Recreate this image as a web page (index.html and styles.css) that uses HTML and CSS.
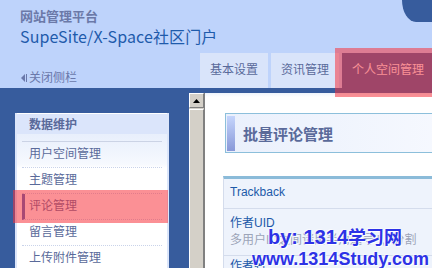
FILE: index.html
```html
<!DOCTYPE html>
<html lang="zh-CN">

<head>
    <meta charset="UTF-8">
    <title>SupeSite/X-Space 管理平台</title>
    <link rel="stylesheet" href="styles.css">
</head>

<body>
    <div class="page">

        <!-- Kop met logo en tabs -->
        <header class="top">
            <div class="brand">
                <div class="brand-sub">网站管理平台</div>
                <div class="brand-name">SupeSite/X-Space社区门户</div>
                <a class="toggle">
                    <svg width="9" height="10" viewBox="0 0 9 10">
                        <path d="M5 1 L1 5 L5 9 Z" fill="#6a78aa" />
                        <rect x="6" y="1" width="1" height="8" fill="#6a78aa" />
                    </svg>关闭侧栏
                </a>
            </div>
            <nav class="tabs">
                <a class="tab">基本设置</a>
                <a class="tab">资讯管理</a>
                <a class="tab active">个人空间管理</a>
            </nav>
        </header>

        <div class="strip"></div>

        <div class="main">
            <!-- Zijmenu -->
            <aside class="side">
                <div class="menu">
                    <div class="menu-head">数据维护</div>
                    <div class="menu-body">
                        <div class="menu-gap"></div>
                        <ul>
                            <li>用户空间管理</li>
                            <li>主题管理</li>
                            <li class="current">评论管理</li>
                            <li>留言管理</li>
                            <li>上传附件管理</li>
                        </ul>
                    </div>
                </div>
            </aside>

            <!-- Schuifbalk -->
            <div class="scroll">
                <div class="scroll-btn">
                    <svg width="7" height="4" viewBox="0 0 7 4">
                        <path d="M3.5 0 L7 4 L0 4 Z" fill="#000" />
                    </svg>
                </div>
                <div class="scroll-thumb"></div>
            </div>

            <!-- Inhoud -->
            <div class="content">
                <div class="title-box">
                    <span class="accent"></span>
                    <h2>批量评论管理</h2>
                </div>
                <div class="form">
                    <div class="row row-single">Trackback</div>
                    <div class="row">
                        <div class="label">作者UID</div>
                        <div class="desc">多用户ID之间请用半角逗号 "," 分割</div>
                    </div>
                    <div class="row row-last">
                        <div class="label">作者名</div>
                    </div>
                </div>
            </div>
        </div>

        <!-- Markeringen over de pagina -->
        <div class="mark mark-tab"></div>
        <div class="mark mark-item"></div>

        <div class="watermark">
            <div class="wm-top">by: 1314<span>学习网</span></div>
            <div class="wm-bottom">www.1314Study.com</div>
        </div>
    </div>
</body>

</html>
```

FILE: styles.css
```css
/* Basis */
html,
body {
    margin: 0;
    padding: 0;
    overflow: hidden;
    font-family: "Liberation Sans", "Noto Sans CJK SC", sans-serif;
    font-size: 12px;
    background: #ffffff;
}

.page {
    position: relative;
    width: 432px;
    height: 268px;
    overflow: hidden;
}

/* Kop */
.top {
    position: relative;
    display: flex;
    height: 88px;
    background: #bed3fb;
}

.top::after {
    content: "";
    position: absolute;
    top: 0;
    right: 0;
    width: 30px;
    height: 22px;
    background: #375c9d;
    border-bottom-left-radius: 14px 22px;
}

.brand {
    flex: 0 0 180px;
    min-width: 0;
    padding: 8px 0 0 20px;
    white-space: nowrap;
}

.brand-sub {
    font-family: "Noto Sans CJK SC", sans-serif;
    font-size: 13px;
    font-weight: bold;
    line-height: 16px;
    color: #6b79a8;
}

.brand-name {
    margin-top: 2px;
    font-family: "Noto Sans CJK SC", sans-serif;
    font-size: 16px;
    line-height: 20px;
    letter-spacing: 0.1px;
    color: #1f5bab;
}

.toggle {
    display: flex;
    align-items: center;
    margin-top: 24px;
    line-height: 16px;
    color: #6a78aa;
}

.tabs {
    display: flex;
    gap: 3px;
    align-self: flex-end;
}

.tab {
    height: 35px;
    line-height: 35px;
    padding: 0 10px;
    background: #d9e4fa;
    color: #5a6a9a;
    white-space: nowrap;
}

.tab.active {
    background: #375c9d;
    color: #ffffff;
}

.strip {
    height: 5px;
    background: #375c9d;
}

/* Hoofddeel */
.main {
    display: grid;
    grid-template-columns: 189px 16px 1fr;
    height: 175px;
}

.side {
    background: #375c9d;
    padding: 20px 0 0 15px;
}

.menu {
    width: 150px;
    height: 200px;
    background: #ffffff;
    border-left: 2px solid #dce6fa;
    border-right: 2px solid #dce6fa;
}

.menu-head {
    height: 17px;
    padding: 3px 0 0 12px;
    border-top: 1px solid #ffffff;
    background: #dbe5fb;
    font-weight: bold;
    line-height: 17px;
    color: #5a6a9a;
}

.menu-body {
    padding: 0 5px;
    background: linear-gradient(#e8effc, #f6f9fe 30px, #ffffff 34px);
}

.menu-gap {
    height: 7px;
    border-bottom: 1px solid #cbd3e5;
}

.menu-body ul {
    list-style: none;
    margin: 0;
    padding: 0;
}

.menu-body li {
    height: 25px;
    line-height: 25px;
    padding-left: 7px;
    border-bottom: 1px dotted #c9d3ea;
    color: #5a6a9a;
}

.menu-body li.current {
    padding-left: 4px;
    border-left: 3px solid #4a62b8;
}

/* Schuifbalk */
.scroll {
    background: #d4d0c8;
    box-shadow: inset -1px 0 #808080;
}

.scroll-btn {
    display: flex;
    justify-content: center;
    align-items: center;
    height: 13px;
    margin-right: 1px;
    border-top: 1px solid #ffffff;
    border-left: 1px solid #ffffff;
    border-right: 1px solid #808080;
    border-bottom: 1px solid #808080;
}

.scroll-thumb {
    height: 200px;
    margin: 1px 1px 0 0;
    border-top: 1px solid #ffffff;
    border-left: 1px solid #ffffff;
    border-right: 1px solid #808080;
}

/* Inhoud */
.content {
    overflow: hidden;
    padding: 20px 0 0 18px;
    background: linear-gradient(#eef4fc, #ffffff 4px);
}

.title-box {
    display: flex;
    width: 260px;
    height: 40px;
    box-sizing: border-box;
    margin-left: 2px;
    padding: 2px 1px 1px 1px;
    border: 1px solid #8cbfdb;
    background: linear-gradient(to right, #eaf0fc, #f8faff);
}

.accent {
    width: 8px;
    height: 35px;
    background: linear-gradient(#c5d5fc, #8898d8);
}

.title-box h2 {
    margin: 0;
    padding-left: 8px;
    font-family: "Noto Sans CJK SC", sans-serif;
    font-size: 15px;
    font-weight: bold;
    line-height: 35px;
    color: #5a6a9a;
}

.form {
    width: 260px;
    margin-top: 23px;
    border-top: 3px solid #8bbbd9;
    border-left: 1px solid #d4dcec;
    background: #eef3fc;
}

.row {
    padding: 6px 6px 7px;
    border-bottom: 1px solid #d4dcec;
    color: #1d5aa9;
}

.row-single {
    height: 29px;
    padding: 0 6px;
    line-height: 27px;
}

.row-last {
    padding-top: 2px;
}

.label {
    line-height: 16px;
}

.desc {
    margin-top: 1px;
    line-height: 16px;
    color: #9ca4b8;
    white-space: nowrap;
}

/* Rode markeringen */
.mark {
    position: absolute;
    background: rgba(248, 50, 59, 0.54);
}

.mark-tab {
    left: 335px;
    top: 48px;
    width: 97px;
    height: 49px;
}

.mark-item {
    left: 13px;
    top: 190px;
    width: 155px;
    height: 33px;
}

/* Watermerk */
.watermark {
    position: absolute;
    left: 252px;
    top: 226px;
    font-family: "Liberation Sans", "Noto Sans CJK SC", sans-serif;
    font-weight: bold;
    color: #2d32e6;
    text-shadow: 1px 1px 0 #ffffff, -1px -1px 0 rgba(255, 255, 255, 0.6);
    white-space: nowrap;
}

.wm-top {
    padding-left: 16px;
    font-size: 20px;
    line-height: 22px;
}

.wm-top span {
    font-size: 18px;
}

.wm-bottom {
    font-size: 18px;
    line-height: 20px;
}
```
